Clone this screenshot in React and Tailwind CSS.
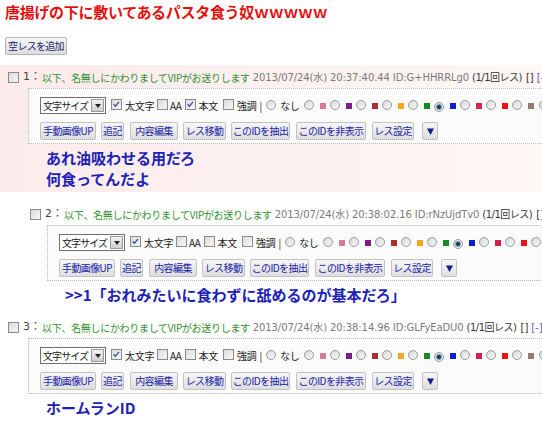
import React from 'react';

const FONT = "font-['DejaVu_Sans','Noto_Sans_CJK_JP',sans-serif]";
const JP = "font-['Noto_Sans_CJK_JP',sans-serif]";

const swatches = ['#d77b9b', '#7d1a85', '#a8302c', '#f6a623', '#148a20', '#0a1fd0', '#d4224a', '#f01010', '#9a7a6e'];

function Check({ checked }) {
  return (
    <span className="relative inline-block w-[11px] h-[11px] border border-[#8a8a8a] bg-gradient-to-br from-[#dcdcdc] to-[#f6f6f6] shrink-0">
      {checked && (
        <svg viewBox="0 0 11 11" className="absolute inset-0 w-full h-full">
          <path d="M2 5.2 L4.2 7.6 L8.6 2.2" stroke="#3a4aa0" strokeWidth="1.5" fill="none" />
        </svg>
      )}
    </span>
  );
}

function Radio({ checked }) {
  return (
    <span className="relative inline-flex items-center justify-center w-[10px] h-[10px] rounded-full border border-[#9a9a9a] bg-gradient-to-br from-[#d8d8d8] to-[#fafafa] shrink-0">
      {checked && <span className="w-[6px] h-[6px] rounded-full bg-[#1f3550] border border-[#6ba0c8]" />}
    </span>
  );
}

function Btn({ children, className = '' }) {
  return (
    <span className={`inline-flex items-center justify-center h-[18px] border border-[#c2c2c2] rounded-[2px] bg-gradient-to-b from-[#f6f6f6] to-[#dedede] text-[#1b22a8] text-[10px] leading-none tracking-[-0.6px] whitespace-nowrap shrink-0 ${JP} ${className}`}>
      {children}
    </span>
  );
}

function Toolbar({ honbun }) {
  return (
    <div className={`w-[560px] border border-dotted border-[#b8b8b8] bg-[#fbfbfb] pl-[11px] pt-[8px] pb-[3px] flex flex-col gap-[8px] ${JP}`}>
      <div className="flex items-center h-[17px] text-[10px] text-[#222] whitespace-nowrap">
        <span className="flex items-center justify-between w-[66px] h-[17px] border border-[#707070] bg-white pl-[2px] tracking-[-0.9px]">
          文字サイズ
          <span className="w-[13px] h-[13px] mr-[1px] border border-[#9a9a9a] bg-gradient-to-b from-[#f2f2f2] to-[#cfcfcf] flex items-center justify-center shrink-0">
            <svg viewBox="0 0 6 4" className="w-[6px] h-[4px]"><path d="M0 0 H6 L3 4 Z" fill="#222" /></svg>
          </span>
        </span>
        <span className="ml-[5px]"><Check checked /></span>
        <span className="ml-[3px] tracking-[-0.3px]">太文字</span>
        <span className="ml-[3px]"><Check /></span>
        <span className="ml-[2px] tracking-[-0.3px]">AA</span>
        <span className="ml-[3px]"><Check checked={honbun} /></span>
        <span className="ml-[3px] tracking-[-0.3px]">本文</span>
        <span className="ml-[5px]"><Check /></span>
        <span className="ml-[3px] tracking-[-0.3px]">強調</span>
        <span className="ml-[3px]">|</span>
        <span className="ml-[4px]"><Radio /></span>
        <span className="ml-[4px] tracking-[-0.3px]">なし</span>
        {swatches.map((c, i) => (
          <span key={c} className="flex items-center">
            <span className="ml-[4px]"><Radio checked={i === 5} /></span>
            <span className="ml-[6px] w-[6px] h-[6px]" style={{ background: c }} />
          </span>
        ))}
        <span className="ml-[5px]"><Radio /></span>
      </div>
      <div className="flex items-center">
        <Btn className="w-[56px]">手動画像UP</Btn>
        <Btn className="ml-[5px] w-[23px]">追記</Btn>
        <Btn className="ml-[6px] w-[48px]">内容編集</Btn>
        <Btn className="ml-[5px] w-[43px]">レス移動</Btn>
        <Btn className="ml-[5px] w-[59px]">このIDを抽出</Btn>
        <Btn className="ml-[6px] w-[70px]">このIDを非表示</Btn>
        <Btn className="ml-[6px] w-[42px]">レス設定</Btn>
        <Btn className="ml-[8px] w-[16px]">
          <svg viewBox="0 0 7 7" className="w-[7px] h-[7px]"><path d="M0 0.5 H7 L3.5 7 Z" fill="#121a8a" /></svg>
        </Btn>
      </div>
    </div>
  );
}

function Post({ num, date, id, indent, pink, honbun, lines }) {
  return (
    <div className={`${pink ? 'bg-gradient-to-r from-[#fcebeb] via-[#fdf1f1] to-[#fff6f6] pt-[4px]' : ''} pb-[3px]`}>
      <div className={`${indent ? 'pl-[30px]' : 'pl-[8px]'} flex items-center h-[17px] text-[10px] whitespace-nowrap`}>
        <Check />
        <span className="ml-[4px] text-[#444] text-[11px]">{num}：</span>
        <span className={`ml-[1px] text-[#2f8f2f] tracking-[-0.3px] ${JP}`}>以下、名無しにかわりましてVIPがお送りします</span>
        <span className="ml-[3px] text-[#7a7a7a] tracking-[-0.1px]">2013/07/24(水) {date} ID:{id}</span>
        <span className="ml-[3px] text-[#333] tracking-[-0.5px]">(1/1回レス)</span>
        <span className="ml-[4px] text-[#333]">[]</span>
        <span className="ml-[3px] text-[#5560b8]">[-]</span>
      </div>
      <div className={`${indent ? 'ml-[47px]' : 'ml-[28px]'} mt-[2px] overflow-hidden`}>
        <Toolbar honbun={honbun} />
      </div>
      <div className={`${indent ? 'pl-[65px]' : 'pl-[46px]'} pt-[3px] text-[15px] leading-[21px] font-bold text-[#1c22b6] ${JP} whitespace-nowrap`}>
        {lines.map((l) => <div key={l}>{l}</div>)}
      </div>
    </div>
  );
}

export default function App() {
  return (
    <div className={`w-[542px] h-[427px] overflow-hidden bg-white ${FONT}`}>
      <div className={`pl-[5px] pt-[2px] text-[15px] leading-[20px] font-bold text-[#e60f0f] ${JP} tracking-[-0.3px] whitespace-nowrap`}>
        唐揚げの下に敷いてあるパスタ食う奴ｗｗｗｗｗ
      </div>
      <div className="pl-[5px] mt-[11px]">
        <span className={`inline-flex items-center justify-center w-[62px] h-[18px] border border-[#b4b4b4] rounded-[2px] bg-gradient-to-b from-[#f8f8f8] to-[#dcdcdc] text-[10px] text-[#1a1a70] tracking-[-0.7px] ${JP}`}>
          空レスを追加
        </span>
      </div>
      <div className="mt-[8px] flex flex-col">
        <Post num="1" date="20:37:40.44" id="G+HHRRLg0" pink honbun lines={['あれ油吸わせる用だろ', '何食ってんだよ']} />
        <div className="h-[14px]" />
        <Post num="2" date="20:38:02.16" id="rNzUjdTv0" indent lines={['>>1「おれみたいに食わずに舐めるのが基本だろ」']} />
        <div className="h-[11px]" />
        <Post num="3" date="20:38:14.96" id="GLFyEaDU0" lines={['ホームランID']} />
      </div>
    </div>
  );
}
